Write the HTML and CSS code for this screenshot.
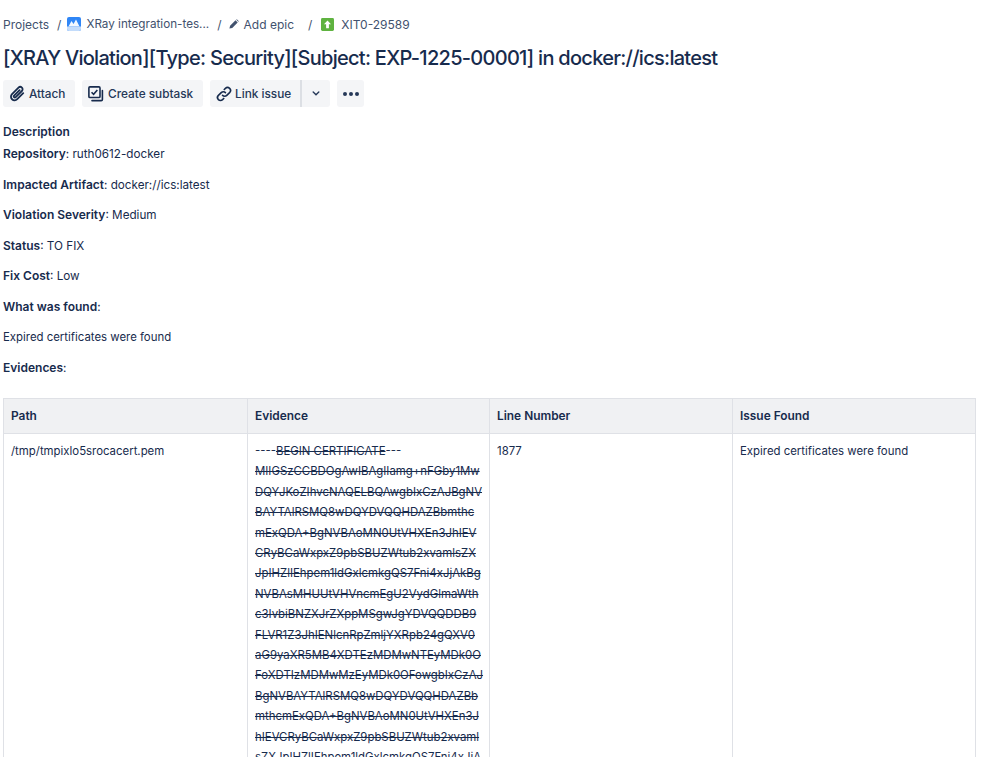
FILE: index.html
```html
<!DOCTYPE html>
<html lang="en">
<head>
<meta charset="utf-8">
<title>XIT0-29589</title>
<link rel="stylesheet" href="styles.css">
</head>
<body>
<main class="page">
  <nav class="crumbs">
    <span class="crumb">Projects</span><span class="sep s1">/</span>
    <svg class="ic16 proj" viewBox="0 0 14 14"><rect width="14" height="14" rx="2" fill="#2f86f6"/><path d="M1.500 9.500L4.500 4l2 3 2.500-4.500 3.500 7z" fill="#f2f8ff"/><path d="M0 9.500h14V12a2 2 0 0 1-2 2H2a2 2 0 0 1-2-2z" fill="#c3dcfb"/></svg>
    <span class="crumb xr">XRay integration-tes...</span><span class="sep s2">/</span>
    <svg class="pencil" viewBox="0 0 12 12"><path d="M0.500 11.500l.8-3.400L7.800 1.600l2.600 2.600-6.500 6.500zM8.700.8l.7-.6 2.400 2.400-.7.800z" fill="#42526e"/></svg>
    <span class="crumb ep">Add epic</span><span class="sep s3">/</span>
    <svg class="ic16 story" viewBox="0 0 14 14"><rect width="14" height="14" rx="1.500" fill="#5fb340"/><path d="M7 2.800l3.800 4H8.500V11h-3V6.800H3.200z" fill="#fff"/></svg>
    <span class="crumb key">XIT0-29589</span>
  </nav>
  <h1 class="title">[XRAY Violation][Type: Security][Subject: EXP-1225-00001] in docker://ics:latest</h1>
  <div class="actions">
    <button class="btn b-attach"><svg class="bi clip" viewBox="0 0 18 18"><path d="M15.200 8.200l-6 6a3.600 3.600 0 0 1-5.200-5.100l6.500-6.500a2.400 2.400 0 0 1 3.400 3.400L7.700 12.200a1.100 1.100 0 0 1-1.600-1.600l5.500-5.400" fill="none" stroke="#172b4d" stroke-width="1.800" stroke-linecap="round"/></svg>Attach</button>
    <button class="btn b-sub"><svg class="bi" viewBox="0 0 18 18"><rect x="1" y="1" width="12.500" height="12" rx="1.200" fill="none" stroke="#172b4d" stroke-width="1.800"/><path d="M16.200 5v10.200a1.300 1.300 0 0 1-1.300 1.300H4.500" fill="none" stroke="#172b4d" stroke-width="1.800" stroke-linecap="round"/><path d="M4 7l2.300 2.400L10.500 4.500" fill="none" stroke="#172b4d" stroke-width="1.800"/></svg>Create subtask</button>
    <div class="split">
      <button class="btn b-link"><svg class="bi" viewBox="0 0 18 18"><path d="M7.400 10.600a3.300 3.300 0 0 0 4.700 0l3.200-3.200a3.300 3.300 0 0 0-4.700-4.700L9.300 4M10.600 7.400a3.300 3.300 0 0 0-4.700 0l-3.200 3.200a3.300 3.300 0 0 0 4.700 4.700L8.700 14" fill="none" stroke="#172b4d" stroke-width="1.800" stroke-linecap="round"/></svg>Link issue</button>
      <button class="btn b-drop"><svg class="chev" viewBox="0 0 10 6"><path d="M1.500 1l3.500 3.500L8.500 1" fill="none" stroke="#253858" stroke-width="1.700" stroke-linecap="round"/></svg></button>
    </div>
    <button class="btn b-more"><span class="dot"></span><span class="dot"></span><span class="dot"></span></button>
  </div>
  <h2 class="desc-h">Description</h2>
  <p class="first"><strong>Repository</strong>: ruth0612-docker</p>
  <p><strong>Impacted Artifact</strong>: docker://ics:latest</p>
  <p><strong>Violation Severity</strong>: Medium</p>
  <p><strong>Status</strong>: TO FIX</p>
  <p><strong>Fix Cost</strong>: Low</p>
  <p><strong>What was found</strong>:</p>
  <p class="plain">Expired certificates were found</p>
  <p><strong>Evidences</strong>:</p>
  <div class="table-clip">
  <table class="grid">
    <colgroup><col class="c1"><col class="c2"><col class="c3"><col class="c4"></colgroup>
    <thead><tr><th>Path</th><th>Evidence</th><th>Line Number</th><th>Issue Found</th></tr></thead>
    <tbody><tr>
      <td>/tmp/tmpixlo5srocacert.pem</td>
      <td class="ev">----<s>BEGIN CERTIFICATE</s>---<br><s>MIIGSzCCBDOgAwIBAgIIamg+nFGby1Mw</s><br><s>DQYJKoZIhvcNAQELBQAwgbIxCzAJBgNV</s><br><s>BAYTAlRSMQ8wDQYDVQQHDAZBbmthc</s><br><s>mExQDA+BgNVBAoMN0UtVHXEn3JhIEV</s><br><s>CRyBCaWxpxZ9pbSBUZWtub2xvamlsZX</s><br><s>JpIHZlIEhpem1ldGxlcmkgQS7Fni4xJjAkBg</s><br><s>NVBAsMHUUtVHVncmEgU2VydGlmaWth</s><br><s>c3IvbiBNZXJrZXppMSgwJgYDVQQDDB9</s><br><s>FLVR1Z3JhIENlcnRpZmljYXRpb24gQXV0</s><br><s>aG9yaXR5MB4XDTEzMDMwNTEyMDk0O</s><br><s>FoXDTIzMDMwMzEyMDk0OFowgbIxCzAJ</s><br><s>BgNVBAYTAlRSMQ8wDQYDVQQHDAZBb</s><br><s>mthcmExQDA+BgNVBAoMN0UtVHXEn3J</s><br><s>hIEVCRyBCaWxpxZ9pbSBUZWtub2xvaml</s><br><s>sZXJpIHZlIEhpem1ldGxlcmkgQS7Fni4xJjA</s></td>
      <td>1877</td>
      <td>Expired certificates were found</td>
    </tr></tbody>
  </table>
  </div>
</main>
</body>
</html>
```
FILE: styles.css
```css
* { box-sizing: border-box; }
html, body { margin: 0; height: 757px; overflow: hidden; background: #fff; }
body { font-family: Inter, "Liberation Sans", sans-serif; font-size: 12px; color: #172b4d; }
.page { padding: 15px 0 0 3px; width: 979px; height: 757px; overflow: hidden; }
.crumbs { display: flex; align-items: center; height: 18px; color: #42526e; font-size: 12px; }
.crumb { white-space: nowrap; }
.xr { font-size: 11.700px; }
.sep { color: #42526e; }
.s1 { margin: 0 6px 0 8px; }
.s2 { margin: 0 7px 0 8px; }
.s3 { margin: 0 9px 0 14px; }
.ic16 { width: 14px; height: 14px; flex: none; }
.proj { margin-right: 5px; }
.pencil { width: 10px; height: 10px; margin-right: 5px; flex: none; }
.story { width: 13px; height: 13px; margin-right: 7px; }
.title { margin: 12px 0 0; font-size: 20px; line-height: 27px; font-weight: 500; color: #172b4d; white-space: nowrap; letter-spacing: -0.720px; }
.actions { display: flex; gap: 7px; margin-top: 8px; height: 27px; }
.btn { display: flex; align-items: center; height: 27px; border: 0; border-radius: 3px; background: #f4f5f7; color: #253858; font: 500 11.800px Inter, "Liberation Sans", sans-serif; padding: 0; }
.bi { width: 16px; height: 16px; flex: none; }
.clip { width: 18px; height: 18px; }
.b-attach { width: 72px; padding-left: 5px; gap: 3px; }
.b-sub { width: 121px; padding-left: 6px; gap: 4px; }
.split { display: flex; }
.b-link { width: 92px; padding-left: 6px; gap: 3px; border-radius: 3px 0 0 3px; border-right: 2px solid #dcdfe4; }
.b-drop { width: 28px; justify-content: center; border-radius: 0 3px 3px 0; }
.chev { width: 8px; height: 5px; }
.b-more { width: 27px; justify-content: center; gap: 2px; }
.dot { width: 4px; height: 4px; border-radius: 50%; background: #253858; }
.desc-h { margin: 17px 0 0; font-size: 12px; line-height: 16px; font-weight: 600; color: #172b4d; }
p { margin: 12.500px 0 0; font-size: 11.700px; line-height: 18px; color: #172b4d; }
p.first { margin-top: 5px; }
p.plain { font-size: 11.400px; }
strong { font-weight: 600; font-size: 12px; }
.table-clip { margin-top: 21px; }
.grid { border-collapse: collapse; table-layout: fixed; width: 972px; font-size: 11.400px; }
.c1 { width: 244px; } .c2 { width: 242px; } .c3 { width: 243px; } .c4 { width: 243px; }
th, td { border: 1px solid #dfe1e6; padding: 7px; text-align: left; vertical-align: top; line-height: 20.400px; overflow: hidden; }
th { background: #f0f1f3; font-weight: 600; height: 35px; font-size: 11.900px; }
.ev { white-space: nowrap; }
```
